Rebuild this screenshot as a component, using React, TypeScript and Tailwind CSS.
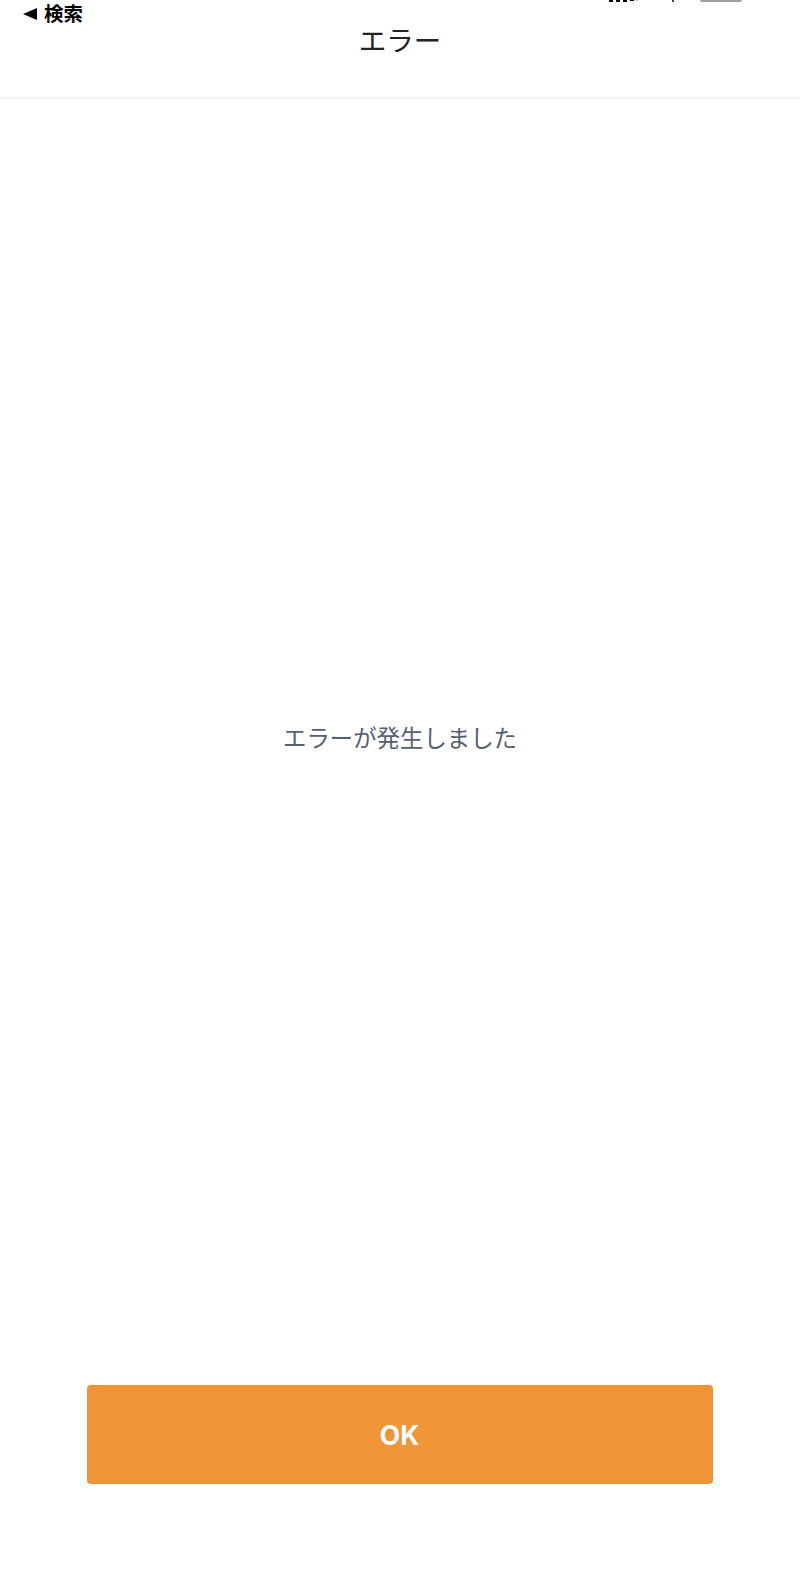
export default function App() {
  const font = "font-['Noto_Sans_CJK_JP','Noto_Sans',sans-serif]";
  return (
    <div className={`${font} flex h-[1579px] w-[800px] flex-col overflow-hidden bg-white`}>
      <header className="grid h-[99px] shrink-0 grid-cols-[1fr_auto_1fr] border-b-2 border-[#f3f3f3]">
        <div className="flex items-start gap-[7px] pl-[23px] pt-[3px]">
          <svg width="14" height="12" viewBox="0 0 14 12" className="mt-[5px]">
            <polygon points="0,6 14,0 14,12" fill="#000" />
          </svg>
          <span className="text-[19.5px] font-bold leading-[20px] text-black">検索</span>
        </div>
        <h1 className="pt-[19px] text-[27.5px] font-normal leading-[40px] text-[#222]">エラー</h1>
        <div className="flex items-start justify-end pr-[58px]">
          <svg width="30" height="3" viewBox="0 0 30 3" className="mr-[33px]">
            <path d="M1 0h4v2H1zM8 0h4v2H8zM15 0h4v2h-4zM22 0h4v1h-4z" fill="#000" />
            <path d="M27 0h3v1h-3z" fill="#ccc" />
          </svg>
          <svg width="4" height="3" viewBox="0 0 4 3" className="mr-[25px]">
            <path d="M1 0h2v2H1z" fill="#444" />
          </svg>
          <div className="h-[2px] w-[42px] rounded-b-[2px] bg-[#a0a0a0]" />
        </div>
      </header>
      <main className="flex flex-1 items-center justify-center pb-[11px]">
        <p className="text-[23.4px] leading-[32px] text-[#566070]">エラーが発生しました</p>
      </main>
      <footer className="flex shrink-0 justify-center pb-[95px] pr-[1px]">
        <button className="h-[99px] w-[626px] rounded-[4px] bg-[#f09537] pt-[2px] font-['Inter',sans-serif] text-[26.5px] font-bold text-white">OK</button>
      </footer>
    </div>
  );
}
